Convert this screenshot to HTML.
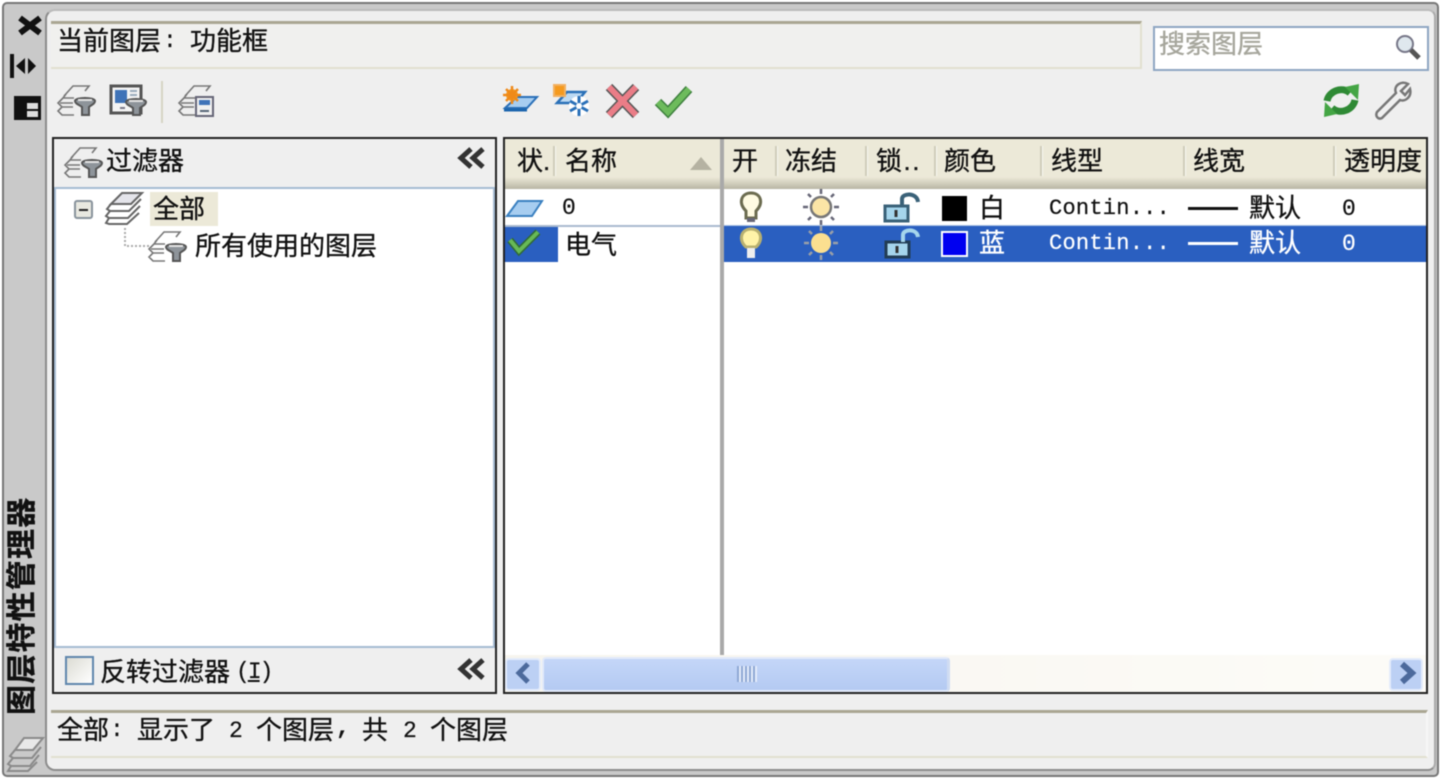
<!DOCTYPE html>
<html lang="zh"><head><meta charset="utf-8"><title>图层特性管理器</title>
<style>
html,body{margin:0;padding:0;width:1441px;height:778px;overflow:hidden;background:#fff}
#w{position:relative;width:1441px;height:778px;overflow:hidden;background:#fff;font-family:"Liberation Sans","WenQuanYi Zen Hei","Noto Sans CJK SC",sans-serif;color:#111;filter:blur(.45px)}
.a{position:absolute;box-sizing:border-box}
.t{position:absolute;white-space:nowrap;font-size:26px;line-height:30px;color:#111;-webkit-text-stroke:.35px currentColor}
.m{font-family:"Liberation Mono","WenQuanYi Zen Hei",monospace;font-size:23px;-webkit-text-stroke:.2px currentColor}
.w{color:#fff}
.hs{position:absolute;width:2px;top:146px;height:30px;background:#cfccba;border-right:1px solid #f8f8f2}
</style></head><body><div id="w">
<div class="a" style="left:2px;top:2px;width:1437px;height:775px;background:#c9c9c9;border:2px solid #777;border-radius:5px"></div>
<div class="a" style="left:45px;top:9px;width:1391px;height:762px;background:#efefef;border:2px solid #8c8c8c;border-right-color:#aaa;border-top-color:#bbb;border-radius:10px 8px 8px 10px"></div>

<div class="a" style="left:51px;top:21px;width:1091px;height:48px;background:#f0f0ee;border-top:3px solid #aaa692;border-bottom:2px solid #e2e0d0;border-right:2px solid #e2e0d0"></div>
<div class="t" style="left:57px;top:26px">当前图层</div>
<div class="t m" style="left:163px;top:26px">:</div>
<div class="t" style="left:190px;top:26px">功能框</div>
<div class="a" style="left:1153px;top:26px;width:276px;height:45px;background:#fff;border:2px solid #8ea6c2"></div>
<div class="t" style="left:1159px;top:29px;color:#a6a69c">搜索图层</div>

<div class="a" style="left:161px;top:81px;width:2px;height:42px;background:#d6d4c4"></div>

<!-- left panel -->
<div class="a" style="left:52px;top:137px;width:445px;height:557px;background:#efefef;border:2px solid #222"></div>
<div class="a" style="left:54px;top:187px;width:441px;height:461px;background:#fff;border:2px solid #a5bbd3"></div>
<div class="t" style="left:106px;top:146px">过滤器</div>
<div class="a" style="left:150px;top:192px;width:68px;height:34px;background:#ece9d8"></div>
<div class="t" style="left:153px;top:194px">全部</div>
<div class="t" style="left:195px;top:231px">所有使用的图层</div>
<div class="a" style="left:65px;top:656px;width:29px;height:29px;background:linear-gradient(135deg,#dcdcd4,#fff);border:2px solid #5f86ad"></div>
<div class="t" style="left:100px;top:657px">反转过滤器</div>
<div class="t m" style="left:236px;top:657px;letter-spacing:-2px">(<u>I</u>)</div>

<!-- right panel -->
<div class="a" style="left:503px;top:137px;width:925px;height:557px;background:#fff;border:2px solid #222"></div>
<div class="a" style="left:505px;top:139px;width:921px;height:50px;background:linear-gradient(#ece9d8 0,#ece9d8 76%,#cfccba 90%,#b8b5a4 100%)"></div>
<div class="a" style="left:505px;top:190px;width:215px;height:37px;border-bottom:2px solid #a9b9cf"></div>
<div class="a" style="left:505px;top:227px;width:53px;height:35px;background:#2a5fc0"></div>
<div class="a" style="left:723px;top:225px;width:703px;height:37px;background:#2a5fc0;border-top:1px solid #a9c0e2"></div>
<div class="a" style="left:720px;top:139px;width:4px;height:516px;background:#a9a9a9"></div>

<div class="hs" style="left:553px"></div>
<div class="hs" style="left:775px"></div>
<div class="hs" style="left:865px"></div>
<div class="hs" style="left:934px"></div>
<div class="hs" style="left:1040px"></div>
<div class="hs" style="left:1183px"></div>
<div class="hs" style="left:1333px"></div>

<div class="t" style="left:517px;top:146px">状.</div>
<div class="t" style="left:565px;top:146px">名称</div>
<div class="t" style="left:732px;top:146px">开</div>
<div class="t" style="left:785px;top:146px">冻结</div>
<div class="t" style="left:876px;top:146px;letter-spacing:1.5px">锁..</div>
<div class="t" style="left:944px;top:146px">颜色</div>
<div class="t" style="left:1051px;top:146px">线型</div>
<div class="t" style="left:1193px;top:146px">线宽</div>
<div class="t" style="left:1344px;top:146px;width:81px;overflow:hidden">透明度</div>

<div class="t m" style="left:562px;top:193px">0</div>
<div class="t" style="left:565px;top:230px">电气</div>
<div class="t" style="left:979px;top:193px">白</div>
<div class="t w" style="left:979px;top:228px">蓝</div>
<div class="t m" style="left:1049px;top:194px;letter-spacing:.25px;font-size:22px">Contin...</div>
<div class="t m w" style="left:1049px;top:229px;letter-spacing:.25px;font-size:22px">Contin...</div>
<div class="a" style="left:1188px;top:207px;width:50px;height:3px;background:#111"></div>
<div class="a" style="left:1188px;top:242px;width:50px;height:3px;background:#fff"></div>
<div class="t" style="left:1249px;top:193px">默认</div>
<div class="t w" style="left:1249px;top:228px">默认</div>
<div class="t m" style="left:1342px;top:194px">0</div>
<div class="t m w" style="left:1342px;top:229px">0</div>
<div class="a" style="left:942px;top:196px;width:25px;height:25px;background:#000"></div>
<div class="a" style="left:941px;top:231px;width:27px;height:26px;background:#0000f0;border:2px solid #fff"></div>

<!-- scrollbar -->
<div class="a" style="left:505px;top:655px;width:921px;height:37px;background:linear-gradient(90deg,#f7f5ee,#fdfcf8)"></div>
<div class="a" style="left:505px;top:658px;width:36px;height:33px;background:#bcd0f4;border:2px solid #e4ecfb;border-radius:4px"></div>
<div class="a" style="left:1389px;top:658px;width:34px;height:33px;background:#bcd0f4;border:2px solid #e4ecfb;border-radius:4px"></div>
<div class="a" style="left:542px;top:657px;width:408px;height:35px;background:linear-gradient(#c4d6f8,#b4caf2);border:2px solid #e2eafa;border-right:3px solid #d0dcf2;border-radius:4px"></div>
<div class="a" style="left:737px;top:666px;width:20px;height:16px;background:repeating-linear-gradient(90deg,#8ea8d4 0 2px,#e4ecfb 2px 4px)"></div>

<!-- status -->
<div class="a" style="left:51px;top:710px;width:1377px;height:48px;background:#efefef;border-top:3px solid #aaa692;border-bottom:2px solid #e2e0d0;border-right:2px solid #f7f7f7"></div>
<div class="t" style="left:57px;top:715px">全部</div>
<div class="t m" style="left:110px;top:715px">:</div>
<div class="t" style="left:137px;top:715px">显示了</div>
<div class="t m" style="left:229px;top:716px">2</div>
<div class="t" style="left:256px;top:715px">个图层</div>
<div class="t m" style="left:336px;top:713px;font-weight:bold">,</div>
<div class="t" style="left:362px;top:715px">共</div>
<div class="t m" style="left:403px;top:716px">2</div>
<div class="t" style="left:430px;top:715px">个图层</div>

<!-- side title -->
<div class="t" style="left:8px;top:715px;transform-origin:0 0;transform:rotate(-90deg);font-weight:bold;font-size:30px;line-height:30px;letter-spacing:1.2px;color:#111">图层特性管理器</div>

<svg class="a" style="left:0;top:0" width="1441" height="778" viewBox="0 0 1441 778" fill="none">
<!-- close / autohide / props -->
<path d="M20 18L40 33M40 18L20 33" stroke="#111" stroke-width="6"/>
<path d="M12 54V78" stroke="#111" stroke-width="4"/><path d="M25 58L16 66L25 74Z M28 58L36 66L28 74Z" fill="#111"/>
<path d="M14 96H41V120H14Z" fill="#111"/><path d="M27 103H38V117H27Z" fill="#dedede"/><path d="M27 110H38" stroke="#111" stroke-width="2"/>

<!-- filter icons -->
<g transform="translate(58,85)" stroke="#777" stroke-width="1.6">
<path d="M6 11L15 1H31L27 6M8 9L5 13H16M2 18H15M5 13L0 18L4 22H15M4 22L0 26L4 30H16"/>
<path d="M17 16C17 12 37 12 37 16C37 19 33 20 31 22V30H24V22C22 20 17 19 17 16Z" fill="#8e949a" stroke="#555" stroke-width="2"/><path d="M20 15H34" stroke="#e4e4e4" stroke-width="2"/>
</g>
<g transform="translate(65,147)" stroke="#777" stroke-width="1.6">
<path d="M6 11L15 1H31L27 6M8 9L5 13H16M2 18H15M5 13L0 18L4 22H15M4 22L0 26L4 30H16"/>
<path d="M17 16C17 12 37 12 37 16C37 19 33 20 31 22V30H24V22C22 20 17 19 17 16Z" fill="#8e949a" stroke="#555" stroke-width="2"/><path d="M20 15H34" stroke="#e4e4e4" stroke-width="2"/>
</g>
<g transform="translate(149,231)" stroke="#777" stroke-width="1.6">
<path d="M6 11L15 1H31L27 6M8 9L5 13H16M2 18H15M5 13L0 18L4 22H15M4 22L0 26L4 30H16"/>
<path d="M17 16C17 12 37 12 37 16C37 19 33 20 31 22V30H24V22C22 20 17 19 17 16Z" fill="#8e949a" stroke="#555" stroke-width="2"/><path d="M20 15H34" stroke="#e4e4e4" stroke-width="2"/>
</g>
<g transform="translate(110,85)">
<path d="M1 1H31V28H1Z" fill="#f4f4f4" stroke="#555" stroke-width="3"/>
<path d="M5 5H17V18H5Z" fill="#3f73b8"/><path d="M20 6H27M20 10H27" stroke="#9ab" stroke-width="2"/>
<path d="M10 23h5" stroke="#778" stroke-width="2"/>
<path d="M16 17C16 13 36 13 36 17C36 20 32 21 30 23V30H23V23C21 21 16 20 16 17Z" fill="#8e949a" stroke="#555" stroke-width="2"/><path d="M19 16H33" stroke="#e4e4e4" stroke-width="2"/>
</g>
<g transform="translate(179,85)" stroke="#777" stroke-width="1.6">
<path d="M6 11L15 1H31L27 6M8 9L5 13H16M2 18H15M5 13L0 18L4 22H15M4 22L0 26L4 30H16"/>
<path d="M17 12H34V31H17Z" fill="#f0f0f0" stroke="#667" stroke-width="2"/><path d="M20 15H31V20H20Z" fill="#3f73b8" stroke="none"/><path d="M21 26H30" stroke="#567" stroke-width="2"/>
</g>

<!-- layers icons -->
<g stroke="#666" stroke-width="2" fill="none">
<path d="M111 204L122 193H142L131 204Z" fill="#e4e4ea"/><path d="M111 204L107 209L110 211H129L141 199M110 211L106 216L109 218H128L140 206M109 218L106 223L109 224H127L139 213"/>
<path d="M15 750L24 738H43L33 750Z" fill="#e8e8e8" stroke="#8a8a8a"/><path d="M15 750L10 756L13 758H32L41 747M13 758L8 764L11 766H30L39 755M11 766L8 771H28L37 762" stroke="#8a8a8a"/>
</g>
<!-- tree -->
<rect x="75" y="201" width="17" height="17" rx="2" fill="#e8e8e0" stroke="#88939c" stroke-width="2"/><path d="M79 210H88" stroke="#222" stroke-width="2"/>
<path d="M125 228V246H149" stroke="#aaa" stroke-width="2" stroke-dasharray="2 2"/>

<!-- search -->
<circle cx="1405" cy="44" r="8" fill="#dfe8ee" stroke="#778" stroke-width="2"/><path d="M1411 50L1419 58" stroke="#555" stroke-width="5"/>

<!-- new layer icons -->
<path d="M505 108L517 97H537L527 108Z" fill="#a7cdf0" stroke="#2a70b8" stroke-width="2"/>
<path d="M504 110H527" stroke="#1b65ad" stroke-width="3"/>
<circle cx="512" cy="95" r="6" fill="#f59a1e"/><path d="M512 86V104M503 95H521M506 89L518 101M518 89L506 101" stroke="#ef8a1a" stroke-width="2.5"/>
<g>
<path d="M557 103L567 92H585L576 103Z" fill="#bcd9f2" stroke="#2a70b8" stroke-width="2.5"/>
<path d="M554 85H565V96H554Z" fill="#f59a1e" stroke="#f2b060" stroke-width="2"/>
<circle cx="579" cy="106" r="10" fill="#fff"/><path d="M579 96V116M570 101L588 111M588 101L570 111" stroke="#2a70b8" stroke-width="3"/><circle cx="579" cy="106" r="3" fill="#fff"/>
</g>
<path d="M609 87L636 115M636 87L609 115" stroke="#555" stroke-width="9"/><path d="M609 87L636 115M636 87L609 115" stroke="#ea7d87" stroke-width="6"/>
<path d="M658 102L668 112L689 89" stroke="#3d7f3d" stroke-width="9"/><path d="M658 102L668 112L689 89" stroke="#6dbb5c" stroke-width="6"/>

<!-- refresh & wrench -->
<path d="M1327 101C1329 91 1342 86 1350 93" stroke="#2f8a35" stroke-width="7"/><path d="M1345 87L1359 84L1358 100Z" fill="#44a544"/>
<path d="M1355 100C1353 110 1340 115 1332 108" stroke="#2f8a35" stroke-width="7"/><path d="M1337 114L1324 117L1325 102Z" fill="#44a544"/>
<path d="M1377 112L1396 93C1393 86 1401 80 1408 84L1401 91L1405 95L1410 89C1412 97 1405 102 1400 100L1382 118C1378 120 1375 116 1377 112Z" fill="#f0f0f0" stroke="#777" stroke-width="2.5"/>

<!-- chevrons -->
<path d="M471 149L461 158L471 167M483 149L473 158L483 167" stroke="#333" stroke-width="5"/>
<path d="M471 660L461 669L471 678M483 660L473 669L483 678" stroke="#333" stroke-width="5"/>
<path d="M690 170H712L701 157Z" fill="#b5b2a2"/>
<path d="M528 664L519 673L528 682" stroke="#4c6a9c" stroke-width="5"/>
<path d="M1402 664L1412 673L1402 682" stroke="#4c6a9c" stroke-width="6"/>

<!-- status icons -->
<path d="M507 216L518 201H542L532 216Z" fill="#a7cdf0" stroke="#3a80c0" stroke-width="2"/>
<path d="M510 240L519 251L538 232" stroke="#2f6a35" stroke-width="7"/><path d="M510 240L519 251L538 232" stroke="#67b956" stroke-width="4"/>

<!-- bulbs -->
<path d="M746 218V211C738 203 741 193 751 193C761 193 764 203 756 211V218Z" fill="#fffbe2" stroke="#6c6c50" stroke-width="3"/><path d="M747 220H755" stroke="#667" stroke-width="4"/>
<path d="M746 247C738 240 741 229 751 229C761 229 764 240 756 247Z" fill="#fff3a8" stroke="#b8b070" stroke-width="3"/><path d="M747 248H755V258H747Z" fill="#eee"/>

<!-- suns -->
<g transform="translate(821,207)"><circle r="10" fill="#fbe5a6" stroke="#777" stroke-width="2.5"/><path d="M0-18V-13M0 13V18M-18 0H-13M13 0H18M-13-13L-10-10M10 10L13 13M13-13L10-10M-10 10L-13 13" stroke="#667" stroke-width="2.5"/></g>
<g transform="translate(821,243)"><circle r="10" fill="#fbdf90"/><path d="M0-17V-12M0 12V17M-17 0H-12M12 0H17M-12-12L-9-9M9 9L12 12M12-12L9-9M-9 9L-12 12" stroke="#9aa0a8" stroke-width="2.5"/></g>

<!-- locks -->
<g transform="translate(884,193)"><path d="M1 13H24V28H1Z" fill="#a5d5ec" stroke="#3a6178" stroke-width="3"/><path d="M12 17V24" stroke="#333" stroke-width="3"/><path d="M18 13V6C18 0 33 -1 34 9" stroke="#3a6178" stroke-width="4"/></g>
<g transform="translate(885,229)"><path d="M1 13H24V28H1Z" fill="#a5d5ec" stroke="#223d55" stroke-width="3"/><path d="M12 17V24" stroke="#333" stroke-width="3"/><path d="M18 13V6C18 0 32 -1 33 8" stroke="#a5d5ec" stroke-width="4"/></g>
</svg>
</div></body></html>
